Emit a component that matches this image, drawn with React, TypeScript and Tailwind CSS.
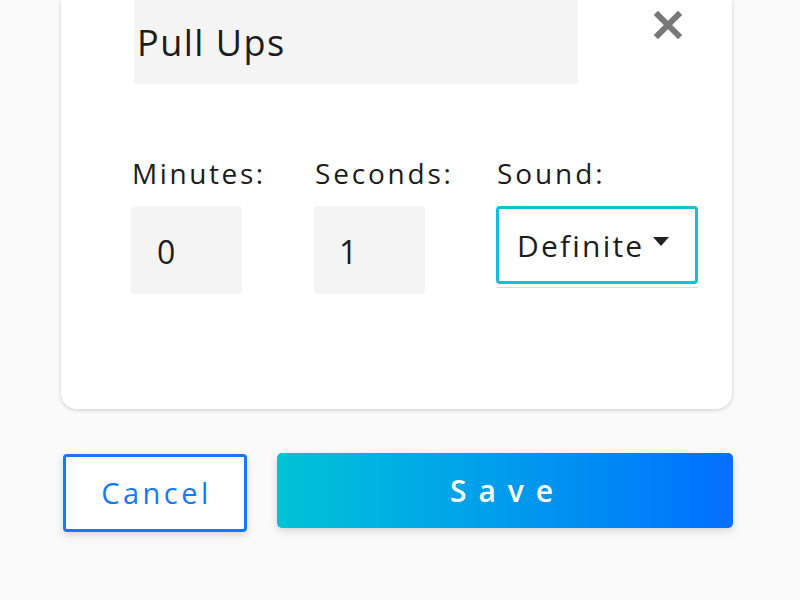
import { useState } from "react"

export default function App() {
    const [name, setName] = useState("Pull Ups")
    const [minutes, setMinutes] = useState("0")
    const [seconds, setSeconds] = useState("1")

    return (
        <div className="w-[800px] h-[600px] bg-[#fafafa] overflow-hidden font-['Open_Sans',sans-serif]">
            <div className="ml-[61px] w-[671px] h-[409px] bg-white rounded-b-[16px] shadow-[0_1px_4px_rgba(0,0,0,0.18)] pl-[73px] pr-[49px]">
                <div className="flex items-start">
                    <input
                        value={name}
                        onChange={(e) => setName(e.target.value)}
                        className="w-[444px] h-[84px] bg-[#f4f4f4] rounded-b-[3px] pl-[3px] text-[36px] tracking-[1.5px] text-[#1c1c1c] outline-none"
                    />
                    <button className="ml-auto mt-[10px] w-[30px] h-[30px] flex items-center justify-center">
                        <svg width="28" height="28" viewBox="0 0 28 28">
                            <path d="M4 4 L24 24 M24 4 L4 24" stroke="#787878" strokeWidth="6" strokeLinecap="square" />
                        </svg>
                    </button>
                </div>

                <div className="grid grid-cols-[183px_182px_202px] mt-[70px] ml-[-3px] text-[#1c1c1c]">
                    <div className="flex flex-col">
                        <label className="text-[28px] tracking-[2.6px] leading-[38px] ml-[1px]">Minutes:</label>
                        <input
                            value={minutes}
                            onChange={(e) => setMinutes(e.target.value)}
                            className="mt-[14px] w-[111px] h-[88px] bg-[#f4f4f4] rounded-[4px] pl-[26px] pt-[2px] text-[32px] outline-none"
                        />
                    </div>
                    <div className="flex flex-col">
                        <label className="text-[28px] tracking-[2.8px] leading-[38px] ml-[1px]">Seconds:</label>
                        <input
                            value={seconds}
                            onChange={(e) => setSeconds(e.target.value)}
                            className="mt-[14px] w-[111px] h-[88px] bg-[#f4f4f4] rounded-[4px] pl-[25px] pt-[2px] text-[32px] outline-none"
                        />
                    </div>
                    <div className="flex flex-col">
                        <label className="text-[28px] tracking-[2.9px] leading-[38px] ml-[1px]">Sound:</label>
                        <div className="mt-[14px] w-[202px] border-b border-[#dcdcdc] pb-[3px]">
                            <div className="h-[78px] border-[3px] border-[#12bfd6] rounded-[4px] flex items-center pl-[18px]">
                                <span className="text-[30px] tracking-[2.2px]">Definite</span>
                                <svg className="ml-[9px] mb-[8px]" width="16" height="9" viewBox="0 0 16 9">
                                    <path d="M0 0 H16 L8 9 Z" fill="#222" />
                                </svg>
                            </div>
                        </div>
                    </div>
                </div>
            </div>

            <div className="flex gap-[30px] ml-[63px] mt-[45px]">
                <button className="w-[184px] h-[78px] border-[3px] border-[#1677ff] rounded-[4px] bg-white text-[#1677ff] text-[29px] tracking-[3.5px] pl-[3px] shadow-[0_3px_8px_rgba(0,0,0,0.15)]">
                    Cancel
                </button>
                <button className="w-[456px] h-[75px] mt-[-1px] rounded-[5px] bg-gradient-to-r from-[#00c3d5] to-[#0a6dff] text-white text-[30px] tracking-[12px] pl-[5px] font-semibold shadow-[0_3px_8px_rgba(0,0,0,0.15)]">
                    Save
                </button>
            </div>
        </div>
    )
}
